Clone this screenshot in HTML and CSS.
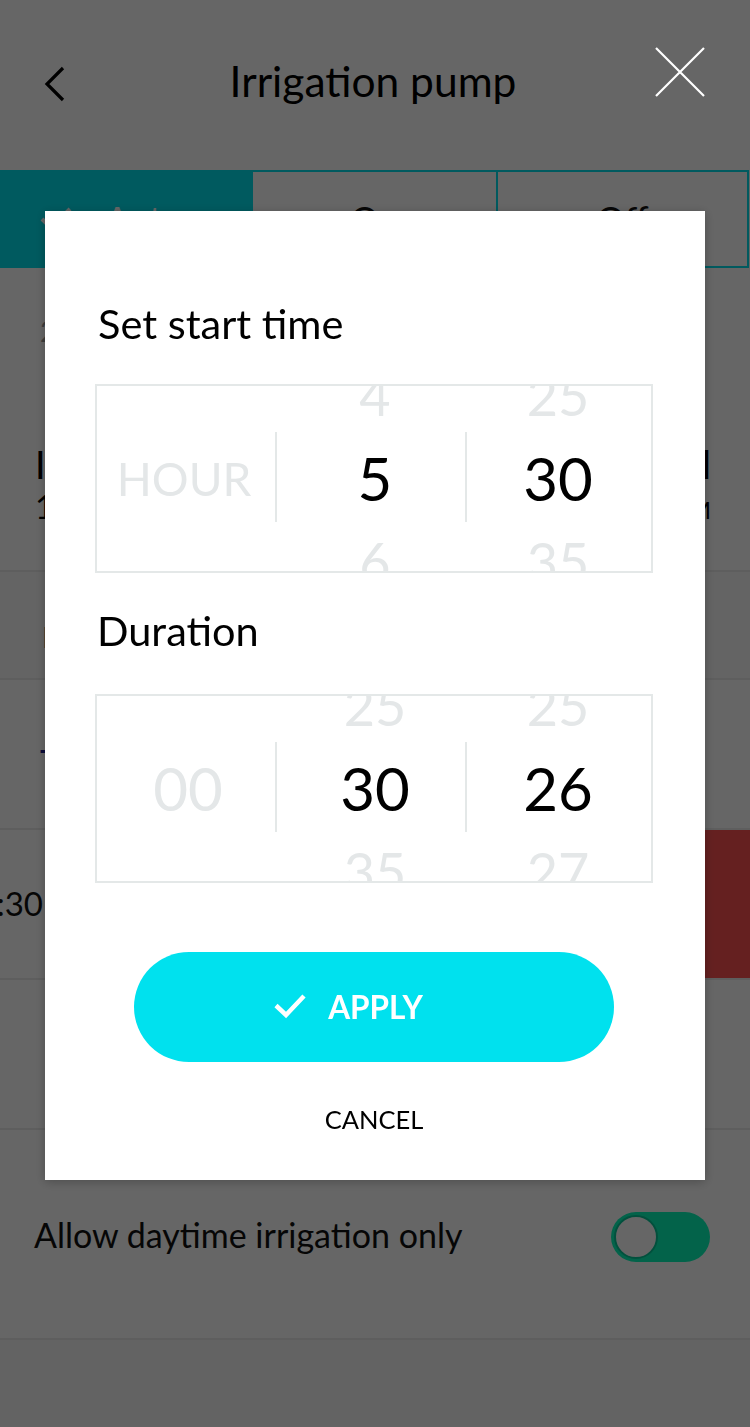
FILE: index.html
```html
<!DOCTYPE html>
<html lang="en">
<head>
<meta charset="utf-8">
<title>Irrigation pump</title>
<link rel="stylesheet" href="styles.css">
</head>
<body>
<div class="page">
  <header class="topbar">
    <svg class="back" width="30" height="40" viewBox="0 0 30 40"><path d="M19 4 L3 20 L19 36" fill="none" stroke="#000" stroke-width="3.2"/></svg>
    <h1 class="title">Irrigation pump</h1>
    <svg class="close" width="52" height="52" viewBox="0 0 52 52"><path d="M2 2 L50 50 M50 2 L2 50" fill="none" stroke="#fff" stroke-width="2.2"/></svg>
  </header>

  <div class="segments">
    <div class="seg seg-active">
      <svg class="seg-check" width="34" height="26" viewBox="0 0 34 26"><path d="M3 13 L12 22 L31 3" fill="none" stroke="#fff" stroke-width="4"/></svg>
      <span>Auto</span>
    </div>
    <div class="seg"><span>On</span></div>
    <div class="seg"><span>Off</span></div>
  </div>

  <section class="info">
    <p class="info-note">2 zones active today</p>
    <div class="stats">
      <div class="stat">
        <div class="stat-label">Irrigation start</div>
        <div class="stat-value">10:30 <small>AM</small></div>
      </div>
      <div class="stat stat-right">
        <div class="stat-label">Next interval</div>
        <div class="stat-value">5:30 <small>AM</small></div>
      </div>
    </div>
  </section>

  <div class="tabs"><span class="tab-label">Interval schedule</span></div>
  <div class="schedule-head"><span>Timer list</span></div>

  <div class="row row-swiped">
    <span class="row-time">05:30</span>
    <span class="row-delete">Delete</span>
  </div>
  <div class="row row-empty"></div>

  <div class="row row-toggle">
    <span class="toggle-label">Allow daytime irrigation only</span>
    <span class="toggle"><span class="knob"></span></span>
  </div>
  <div class="foot"></div>
</div>

<div class="overlay"></div>

<div class="modal">
  <h2 class="modal-title">Set start time</h2>
  <div class="picker">
    <div class="col col-first">
      <div class="item item-muted item-label">HOUR</div>
    </div>
    <div class="col col-mid">
      <div class="item item-side">4</div>
      <div class="item item-sel">5</div>
      <div class="item item-side">6</div>
    </div>
    <div class="col col-last">
      <div class="item item-side">25</div>
      <div class="item item-sel">30</div>
      <div class="item item-side">35</div>
    </div>
  </div>

  <h2 class="modal-title modal-title-2">Duration</h2>
  <div class="picker">
    <div class="col col-first">
      <div class="item item-muted item-zero">00</div>
    </div>
    <div class="col col-mid">
      <div class="item item-side">25</div>
      <div class="item item-sel">30</div>
      <div class="item item-side">35</div>
    </div>
    <div class="col col-last">
      <div class="item item-side">25</div>
      <div class="item item-sel">26</div>
      <div class="item item-side">27</div>
    </div>
  </div>

  <button class="apply">
    <svg class="apply-check" width="34" height="26" viewBox="0 0 34 26"><path d="M3 12.5 L13 22 L31 3" fill="none" stroke="#fff" stroke-width="4.5"/></svg>
    <span>APPLY</span>
  </button>
  <div class="cancel">CANCEL</div>
</div>
</body>
</html>
```

FILE: styles.css
```css
* { box-sizing: border-box; }

html, body {
  margin: 0;
  padding: 0;
}

body {
  width: 750px;
  height: 1427px;
  overflow: hidden;
  font-family: Lato, "Open Sans", "Liberation Sans", sans-serif;
  color: #000;
  background: #f8f8f8;
}

.page {
  display: flex;
  flex-direction: column;
  height: 1427px;
}

/* header */
.topbar {
  height: 170px;
  display: flex;
  align-items: flex-start;
  background: #fff;
}

.back {
  margin: 64px 0 0 44px;
  flex: 0 0 auto;
}

.title {
  flex: 1;
  margin: 0;
  padding-top: 55px;
  font-size: 42.5px;
  line-height: 52px;
  font-weight: 400;
  text-align: center;
  padding-left: 18px;
}

.close {
  position: relative;
  z-index: 5;
  margin: 46px 44px 0 0;
  flex: 0 0 auto;
}

/* segmented control */
.segments {
  height: 98px;
  display: grid;
  grid-template-columns: 253px 245px 1fr;
  background: #fff;
}

.seg {
  border: 2px solid #00e1ee;
  border-left-width: 0;
  display: flex;
  align-items: center;
  justify-content: center;
  font-size: 36px;
  color: #111;
}

.seg:last-child { margin-right: 1px; }

.seg-active {
  background: #00e1ee;
  color: #fff;
  justify-content: flex-start;
  padding-left: 39px;
  gap: 32px;
}

/* info */
.info {
  height: 302px;
  background: #fff;
  padding: 46px 39px 0 35px;
}

.info-note {
  margin: 0 0 0 5px;
  font-size: 28px;
  line-height: 34px;
  color: #9a9a9a;
}

.stats {
  display: flex;
  justify-content: space-between;
  margin-top: 94px;
}

.stat-label {
  font-size: 38px;
  line-height: 44px;
}

.stat-value {
  font-size: 33px;
  line-height: 40px;
}

.stat-value small { font-size: 24px; }

.stat-right { text-align: right; }

.tabs {
  height: 110px;
  background: #fafafa;
  border-top: 2px solid #ebebeb;
  border-bottom: 2px solid #ebebeb;
  padding: 48px 0 0 42px;
}

.tab-label {
  font-size: 28px;
  color: #666;
}

.schedule-head {
  height: 150px;
  background: #fff;
  border-bottom: 2px solid #ebebeb;
  padding: 60px 0 0 40px;
  font-size: 36px;
  line-height: 44px;
  color: #1b2090;
}

.row {
  height: 150px;
  background: #fff;
  border-bottom: 2px solid #ebebeb;
  display: flex;
  align-items: center;
}

.row-swiped {
  justify-content: space-between;
  align-items: stretch;
}

.row-time {
  width: 45px;
  padding-right: 2px;
  overflow: hidden;
  white-space: nowrap;
  direction: rtl;
  font-size: 33px;
  line-height: 146px;
  color: #111;
}

.row-delete {
  width: 260px;
  background: #fd5252;
  color: #fff;
  font-size: 32px;
  display: flex;
  align-items: center;
  justify-content: center;
}

.row-toggle {
  height: 210px;
  justify-content: space-between;
  padding: 0 40px 0 34px;
}

.toggle-label {
  font-size: 34px;
  color: #111;
}

.toggle {
  width: 99px;
  height: 50px;
  margin-top: 6px;
  border-radius: 25px;
  background: #08f8b9;
  padding: 3px;
  display: flex;
}

.knob {
  width: 44px;
  height: 44px;
  border-radius: 50%;
  background: #fff;
  border: 2px solid #06c898;
}

.foot {
  flex: 1;
  background: #f8f8f8;
}

/* overlay + modal */
.overlay {
  position: fixed;
  inset: 0;
  background: rgba(0, 0, 0, 0.6);
  z-index: 2;
}

.modal {
  position: fixed;
  z-index: 3;
  left: 45px;
  top: 211px;
  width: 660px;
  height: 969px;
  background: #fff;
  box-shadow: 0 2px 10px rgba(0, 0, 0, 0.25);
  padding: 88px 52px 0 50px;
  display: flex;
  flex-direction: column;
}

.modal-title {
  margin: 0 0 37px 3px;
  font-size: 41.5px;
  line-height: 48px;
  font-weight: 400;
}

.modal-title-2 {
  margin-top: 33px;
  margin-bottom: 40px;
  margin-left: 2px;
}

.picker {
  height: 189px;
  border: 2px solid #e4e8e8;
  display: grid;
  grid-template-columns: 178px 190px 1fr;
  flex: 0 0 auto;
}

.col {
  position: relative;
  overflow: hidden;
  display: flex;
  flex-direction: column;
  justify-content: center;
  align-items: center;
}

.col-mid { padding-left: 10px; }

.col-mid::before,
.col-last::before {
  content: "";
  position: absolute;
  left: 0;
  top: 46px;
  height: 90px;
  width: 2px;
  background: #e4e8e8;
}

.item {
  flex: 0 0 83px;
  line-height: 83px;
  text-align: center;
  white-space: nowrap;
}

.item-sel {
  font-size: 60px;
  color: #000;
}

.item-side {
  font-size: 54px;
  color: #e4e7e8;
}

.item-muted {
  color: #e4e7e8;
}

.item-label { font-size: 46px; margin-right: 4px; }
.item-zero { font-size: 60px; margin-left: 4px; }

.apply {
  margin: 69px auto 0;
  width: 480px;
  height: 110px;
  flex: 0 0 auto;
  border: 0;
  border-radius: 55px;
  background: #00e1ee;
  color: #fff;
  font-family: inherit;
  font-weight: 700;
  font-size: 31.5px;
  display: flex;
  align-items: center;
  justify-content: center;
  gap: 21px;
  padding: 0 52px 0 0;
}

.apply-check { margin-top: -2px; }

.cancel {
  margin-top: 42px;
  text-align: center;
  font-size: 25.5px;
  line-height: 30px;
}
```
